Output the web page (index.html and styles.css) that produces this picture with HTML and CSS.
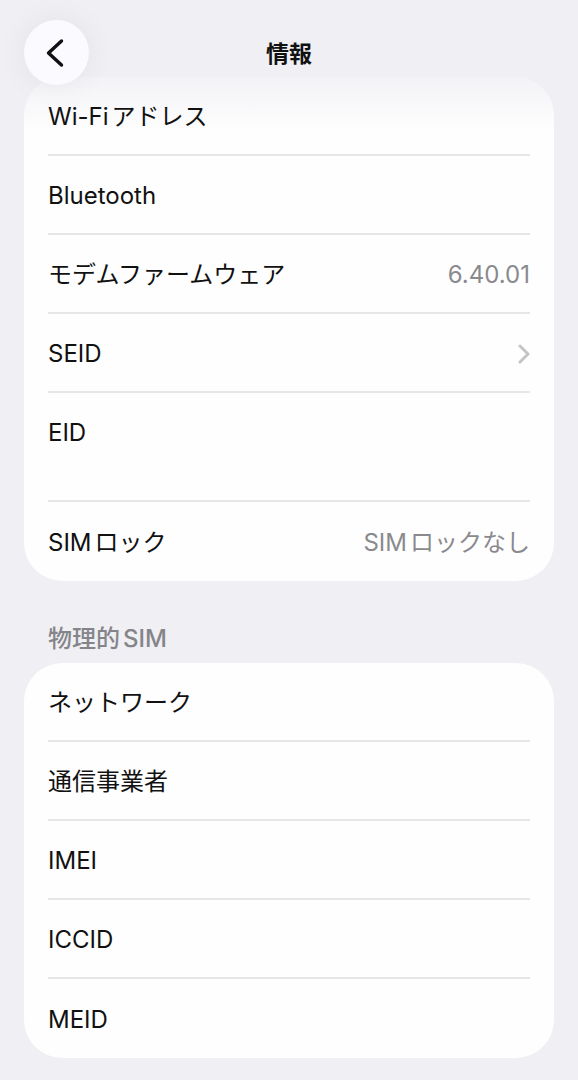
FILE: index.html
```
<!DOCTYPE html>
<html lang="ja">
<head>
    <meta charset="UTF-8">
    <meta name="viewport" content="width=device-width, initial-scale=1.0">
    <title>情報</title>
    <link rel="stylesheet" href="styles.css">
</head>
<body>

<header class="navbar">
    <button type="button" class="back" aria-label="戻る">
        <svg width="20" height="30" viewBox="0 0 20 30" aria-hidden="true">
            <path d="M16.5 3 L3.5 15 L16.5 27" fill="none" stroke="currentColor" stroke-width="3.4" stroke-linecap="round" stroke-linejoin="round"/>
        </svg>
    </button>
    <h1 class="title">情報</h1>
</header>

<main class="content">
    <ul class="card card-top">
        <li><div class="row"><span class="label">Wi-Fiアドレス</span></div></li>
        <li><div class="row"><span class="label">Bluetooth</span></div></li>
        <li>
            <div class="row">
                <span class="label">モデムファームウェア</span>
                <span class="value">6.40.01</span>
            </div>
        </li>
        <li>
            <a class="row" href="#seid">
                <span class="label">SEID</span>
                <svg class="chevron" width="12" height="20" viewBox="0 0 12 20" aria-hidden="true">
                    <path d="M2 2 L10 10 L2 18" fill="none" stroke="currentColor" stroke-width="3" stroke-linecap="round" stroke-linejoin="round"/>
                </svg>
            </a>
        </li>
        <li><div class="row row-tall"><span class="label">EID</span></div></li>
        <li>
            <div class="row">
                <span class="label">SIMロック</span>
                <span class="value">SIMロックなし</span>
            </div>
        </li>
    </ul>

    <h2 class="section-title">物理的SIM</h2>
    <ul class="card">
        <li><div class="row"><span class="label">ネットワーク</span></div></li>
        <li><div class="row"><span class="label">通信事業者</span></div></li>
        <li><div class="row"><span class="label">IMEI</span></div></li>
        <li><div class="row"><span class="label">ICCID</span></div></li>
        <li><div class="row"><span class="label">MEID</span></div></li>
    </ul>
</main>

</body>
</html>
```

FILE: styles.css
```
* {
    box-sizing: border-box;
}

body {
    margin: 0;
    background-color: #efeff4;
    color: #111;
    font-family: Inter, "Noto Sans CJK JP", sans-serif;
    font-size: 24px;
    line-height: 32px;
    text-autospace: normal;
}

/* Navigation bar, the back button hangs over the first card */
.navbar {
    position: relative;
    z-index: 1;
    display: grid;
    grid-template-columns: 65px 1fr 65px;
    align-items: center;
    padding: 20px 24px 0;
    margin-bottom: -8px;
}

.back {
    display: flex;
    align-items: center;
    justify-content: center;
    width: 65px;
    height: 65px;
    padding: 0 4px 0 0;
    border: 0;
    border-radius: 50%;
    background: #fafaff;
    color: #111;
    box-shadow: 0 0 32px rgba(0, 0, 0, 0.06);
}

.title {
    margin: 0;
    padding-top: 2px;
    font-size: 23px;
    font-weight: 700;
    text-align: center;
}

.content {
    padding: 0 24px 23px;
}

.card {
    margin: 0;
    padding: 0 24px;
    list-style: none;
    background: #fefefe;
    border-radius: 38px;
}

.card-top {
    background: linear-gradient(#f3f3f7, #fefefe 56px);
}

.card li {
    border-bottom: 2px solid #e6e6e8;
}

.card li:last-child {
    border-bottom: 0;
}

.row {
    display: flex;
    align-items: center;
    justify-content: space-between;
    min-height: 77px;
    padding-top: 2px;
    color: inherit;
    text-decoration: none;
}

.row-tall {
    align-items: flex-start;
    min-height: 107px;
    padding-top: 24px;
}

.card li:last-child .row {
    min-height: 79px;
}

.value {
    color: #8a8a8e;
}

.chevron {
    color: #c4c4c6;
}

.section-title {
    margin: 0;
    padding: 42px 24px 8px;
    color: #858589;
    font-size: 24px;
    font-weight: 500;
}
```
